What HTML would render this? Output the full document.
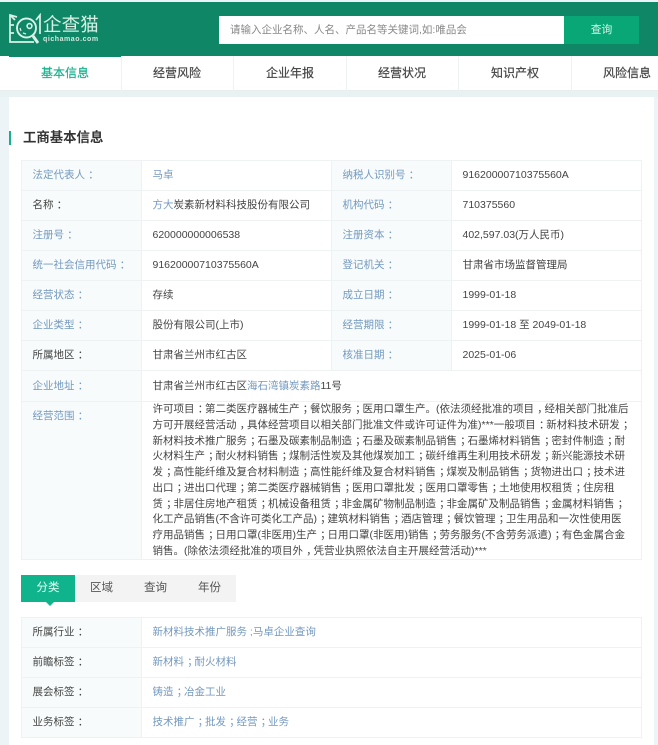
<!DOCTYPE html>
<html lang="zh"><head><meta charset="utf-8"><title>工商基本信息</title>
<style>
*{box-sizing:border-box}
html,body{margin:0;padding:0}
body{width:658px;height:745px;overflow:hidden;position:relative;background:#edf4f7;font-family:"Liberation Sans","Noto Sans CJK SC",sans-serif;font-size:10.5px;color:#444}
.a{position:absolute;white-space:nowrap}
#top{left:0;top:2px;width:658px;height:54px;background:#0f8665}
#nav{left:0;top:56px;width:658px;height:35px;background:#fff;border-bottom:1px solid #e8eeee}
#strip{left:0;top:91px;width:658px;height:6px;background:#e8f2f3}
#panel{left:9px;top:97px;width:645px;height:648px;background:#fff}
.n{top:56px;height:35px;line-height:35px;width:112px;text-align:center;font-size:12px;color:#444;-webkit-text-stroke:.2px #444}
.s{top:56px;width:1px;height:35px;background:#eef2f2}
table{position:absolute;left:21px;border-collapse:collapse;table-layout:fixed;background:#fff;font-family:"Liberation Sans","Noto Sans CJK SC",sans-serif;font-size:10.5px}
td{border:1px solid #eef2f2;padding:0 0 1px 10.5px;vertical-align:middle;white-space:nowrap;height:30px;line-height:14px}
td.l{background:#f7fbfb;color:#7499c0}
td.d{color:#444}
i{font-style:normal;color:#7499c0}
u{text-decoration:none;position:relative;left:3.2px}
.scope{padding-bottom:0}
.scope div{height:15.78px;line-height:15.78px}
.scope div:last-child{height:14px}
.tab{top:575px;height:27px;line-height:27px;width:53px;text-align:center;font-size:11.5px;color:#555}
</style></head><body>
<div class="a" id="top"></div>
<svg class="a" style="left:8px;top:13px" width="36" height="32" viewBox="0 0 36 32" fill="none" stroke="#d9f1e8" stroke-width="1.7">
<path d="M9 4 L2 2 V29 H26"/><path d="M2 2 L7 7 M28 7 L32 2 V21"/><path d="M2 12H6M2 20H6"/>
<circle cx="18.5" cy="15" r="9.5" stroke-width="1.9"/>
<path d="M25 23 L30 30" stroke-width="3"/>
<circle cx="21.5" cy="13" r="2.4" stroke-width="1.6"/><path d="M12 15l1 3M15 20l3 1" stroke-width="1.2"/>
</svg>
<div class="a" style="left:43px;top:12px;font-size:18.5px;line-height:26px;color:#d6f0e6;letter-spacing:.1px">企查猫</div>
<div class="a" style="left:43px;top:35px;font-size:7px;line-height:9px;font-weight:bold;color:#cfeadf;letter-spacing:.55px">qichamao.com</div>
<div class="a" style="left:219px;top:16px;width:345px;height:28px;background:#fff;padding-left:11px;line-height:28px;font-size:10.5px;color:#888">请输入企业名称、人名、产品名等关键词,如:唯品会</div>
<div class="a" style="left:564px;top:16px;width:75px;height:28px;background:#0aa776;color:#d8f5ea;text-align:center;line-height:28px;font-size:10.8px">查询</div>
<div class="a" id="nav"></div>
<div class="a" style="left:9px;top:56px;width:112px;height:1px;background:#0f8665"></div>
<div class="a n" style="left:9px;color:#17b08e;-webkit-text-stroke:.2px #17b08e">基本信息</div>
<div class="a s" style="left:121px"></div>
<div class="a n" style="left:121px">经营风险</div>
<div class="a s" style="left:233px"></div>
<div class="a n" style="left:234px">企业年报</div>
<div class="a s" style="left:346px"></div>
<div class="a n" style="left:346px">经营状况</div>
<div class="a s" style="left:458px"></div>
<div class="a n" style="left:459px">知识产权</div>
<div class="a s" style="left:571px"></div>
<div class="a n" style="left:571px">风险信息</div>
<div class="a" id="strip"></div>
<div class="a" id="panel"></div>
<div class="a" style="left:9px;top:131px;width:2px;height:14px;background:#17b08e"></div>
<div class="a" style="left:23px;top:128px;font-size:13.4px;line-height:20px;color:#333;font-weight:bold">工商基本信息</div>

<table style="top:160px;width:620px">
<colgroup><col style="width:120px"><col style="width:190px"><col style="width:120px"><col style="width:190px"></colgroup>
<tr><td class="l">法定代表人<u>：</u></td><td><i>马卓</i></td><td class="l">纳税人识别号<u>：</u></td><td>91620000710375560A</td></tr>
<tr><td class="l d">名称<u>：</u></td><td><i>方大</i>炭素新材料科技股份有限公司</td><td class="l">机构代码<u>：</u></td><td>710375560</td></tr>
<tr><td class="l">注册号<u>：</u></td><td>620000000006538</td><td class="l">注册资本<u>：</u></td><td>402,597.03(万人民币)</td></tr>
<tr><td class="l">统一社会信用代码<u>：</u></td><td>91620000710375560A</td><td class="l">登记机关<u>：</u></td><td>甘肃省市场监督管理局</td></tr>
<tr><td class="l">经营状态<u>：</u></td><td>存续</td><td class="l">成立日期<u>：</u></td><td>1999-01-18</td></tr>
<tr><td class="l">企业类型<u>：</u></td><td>股份有限公司(上市)</td><td class="l">经营期限<u>：</u></td><td>1999-01-18 至 2049-01-18</td></tr>
<tr><td class="l d">所属地区<u>：</u></td><td>甘肃省兰州市红古区</td><td class="l">核准日期<u>：</u></td><td>2025-01-06</td></tr>
<tr><td class="l" style="height:31px">企业地址<u>：</u></td><td colspan="3" style="height:31px">甘肃省兰州市红古区<i>海石湾镇炭素路</i>11号</td></tr>
<tr><td class="l" style="height:158px;vertical-align:top;padding-top:7px">经营范围<u>：</u></td><td colspan="3" class="scope" style="height:158px;vertical-align:top;padding-top:0">
<div>许可项目<u>：</u>第二类医疗器械生产<u>；</u>餐饮服务<u>；</u>医用口罩生产。(依法须经批准的项目<u>，</u>经相关部门批准后</div>
<div>方可开展经营活动<u>，</u>具体经营项目以相关部门批准文件或许可证件为准)***一般项目<u>：</u>新材料技术研发<u>；</u></div>
<div>新材料技术推广服务<u>；</u>石墨及碳素制品制造<u>；</u>石墨及碳素制品销售<u>；</u>石墨烯材料销售<u>；</u>密封件制造<u>；</u>耐</div>
<div>火材料生产<u>；</u>耐火材料销售<u>；</u>煤制活性炭及其他煤炭加工<u>；</u>碳纤维再生利用技术研发<u>；</u>新兴能源技术研</div>
<div>发<u>；</u>高性能纤维及复合材料制造<u>；</u>高性能纤维及复合材料销售<u>；</u>煤炭及制品销售<u>；</u>货物进出口<u>；</u>技术进</div>
<div>出口<u>；</u>进出口代理<u>；</u>第二类医疗器械销售<u>；</u>医用口罩批发<u>；</u>医用口罩零售<u>；</u>土地使用权租赁<u>；</u>住房租</div>
<div>赁<u>；</u>非居住房地产租赁<u>；</u>机械设备租赁<u>；</u>非金属矿物制品制造<u>；</u>非金属矿及制品销售<u>；</u>金属材料销售<u>；</u></div>
<div>化工产品销售(不含许可类化工产品)<u>；</u>建筑材料销售<u>；</u>酒店管理<u>；</u>餐饮管理<u>；</u>卫生用品和一次性使用医</div>
<div>疗用品销售<u>；</u>日用口罩(非医用)生产<u>；</u>日用口罩(非医用)销售<u>；</u>劳务服务(不含劳务派遣)<u>；</u>有色金属合金</div>
<div>销售。(除依法须经批准的项目外<u>，</u>凭营业执照依法自主开展经营活动)***</div>
</td></tr>
</table>

<div class="a" style="left:21px;top:575px;width:215px;height:27px;background:#f3f3f3"></div>
<div class="a tab" style="left:21px;width:54px;background:#10b48c;color:#e8fff7">分类</div>
<div class="a" style="left:46px;top:602px;width:0;height:0;border:4px solid transparent;border-top-color:#10b48c;border-bottom:0"></div>
<div class="a tab" style="left:75px">区域</div>
<div class="a tab" style="left:129px">查询</div>
<div class="a tab" style="left:183px">年份</div>

<table style="top:617px;width:620px">
<colgroup><col style="width:120px"><col style="width:500px"></colgroup>
<tr><td class="l d">所属行业<u>：</u></td><td><i>新材料技术推广服务 ;马卓企业查询</i></td></tr>
<tr><td class="l d">前瞻标签<u>：</u></td><td><i>新材料<u>；</u>耐火材料</i></td></tr>
<tr><td class="l d">展会标签<u>：</u></td><td><i>铸造<u>；</u>冶金工业</i></td></tr>
<tr><td class="l d">业务标签<u>：</u></td><td><i>技术推广<u>；</u>批发<u>；</u>经营<u>；</u>业务</i></td></tr>
</table>
</body></html>
